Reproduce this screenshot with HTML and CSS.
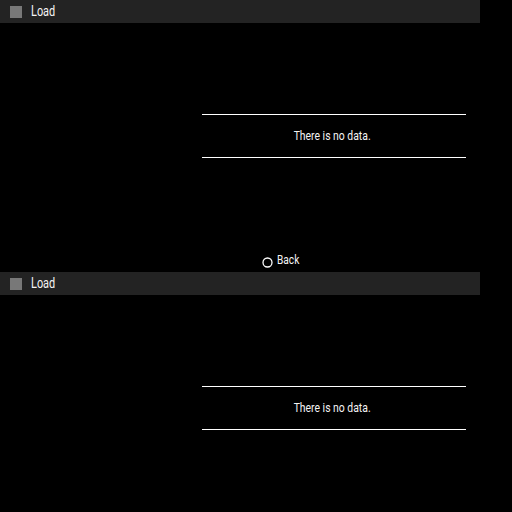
FILE: index.html
```html
<!DOCTYPE html>
<html>
<head>
<meta charset="utf-8">
<link rel="stylesheet" href="styles.css">
</head>
<body>
<div class="screen">
  <div class="header"><span class="icon"></span><span class="title">Load</span></div>
  <div class="panel"><span class="empty">There is no data.</span></div>
  <div class="back"><svg class="circle" width="11" height="11" viewBox="0 0 11 11"><circle cx="5.5" cy="5.5" r="4.5" fill="none" stroke="#fff" stroke-width="1.3"/></svg><span class="back-label">Back</span></div>
</div>
<div class="screen">
  <div class="header"><span class="icon"></span><span class="title">Load</span></div>
  <div class="panel"><span class="empty">There is no data.</span></div>
</div>
</body>
</html>
```
FILE: styles.css
```css
html, body {
  margin: 0;
  padding: 0;
  background: #000;
  overflow: hidden;
}
body {
  font-family: "Roboto", "Liberation Sans", sans-serif;
  color: #f4f4f4;
}
.screen {
  height: 272px;
  display: flex;
  flex-direction: column;
}
.header {
  width: 480px;
  height: 23px;
  background: #232323;
  display: flex;
  align-items: center;
  flex-shrink: 0;
}
.icon {
  width: 12px;
  height: 12px;
  background: #787878;
  margin-left: 10px;
  margin-right: 9px;
}
.title {
  display: inline-block;
  font-size: 14px;
  line-height: 23px;
  transform: scaleX(0.78);
  transform-origin: left center;
}
.panel {
  margin-top: 91px;
  margin-left: 202px;
  width: 264px;
  height: 42px;
  border-top: 1px solid #fff;
  border-bottom: 1px solid #fff;
  display: flex;
  align-items: center;
  justify-content: center;
  flex-shrink: 0;
}
.empty {
  display: inline-block;
  font-size: 13px;
  line-height: 16px;
  margin-right: 3px;
  transform: scaleX(0.8);
  transform-origin: center center;
}
.back {
  margin-top: 94px;
  padding-left: 262px;
  height: 16px;
  display: flex;
  align-items: center;
  flex-shrink: 0;
}
.circle {
  margin-top: 4px;
  margin-right: 4px;
}
.back-label {
  display: inline-block;
  font-size: 13px;
  line-height: 16px;
  transform: scaleX(0.78);
  transform-origin: left center;
}
```
